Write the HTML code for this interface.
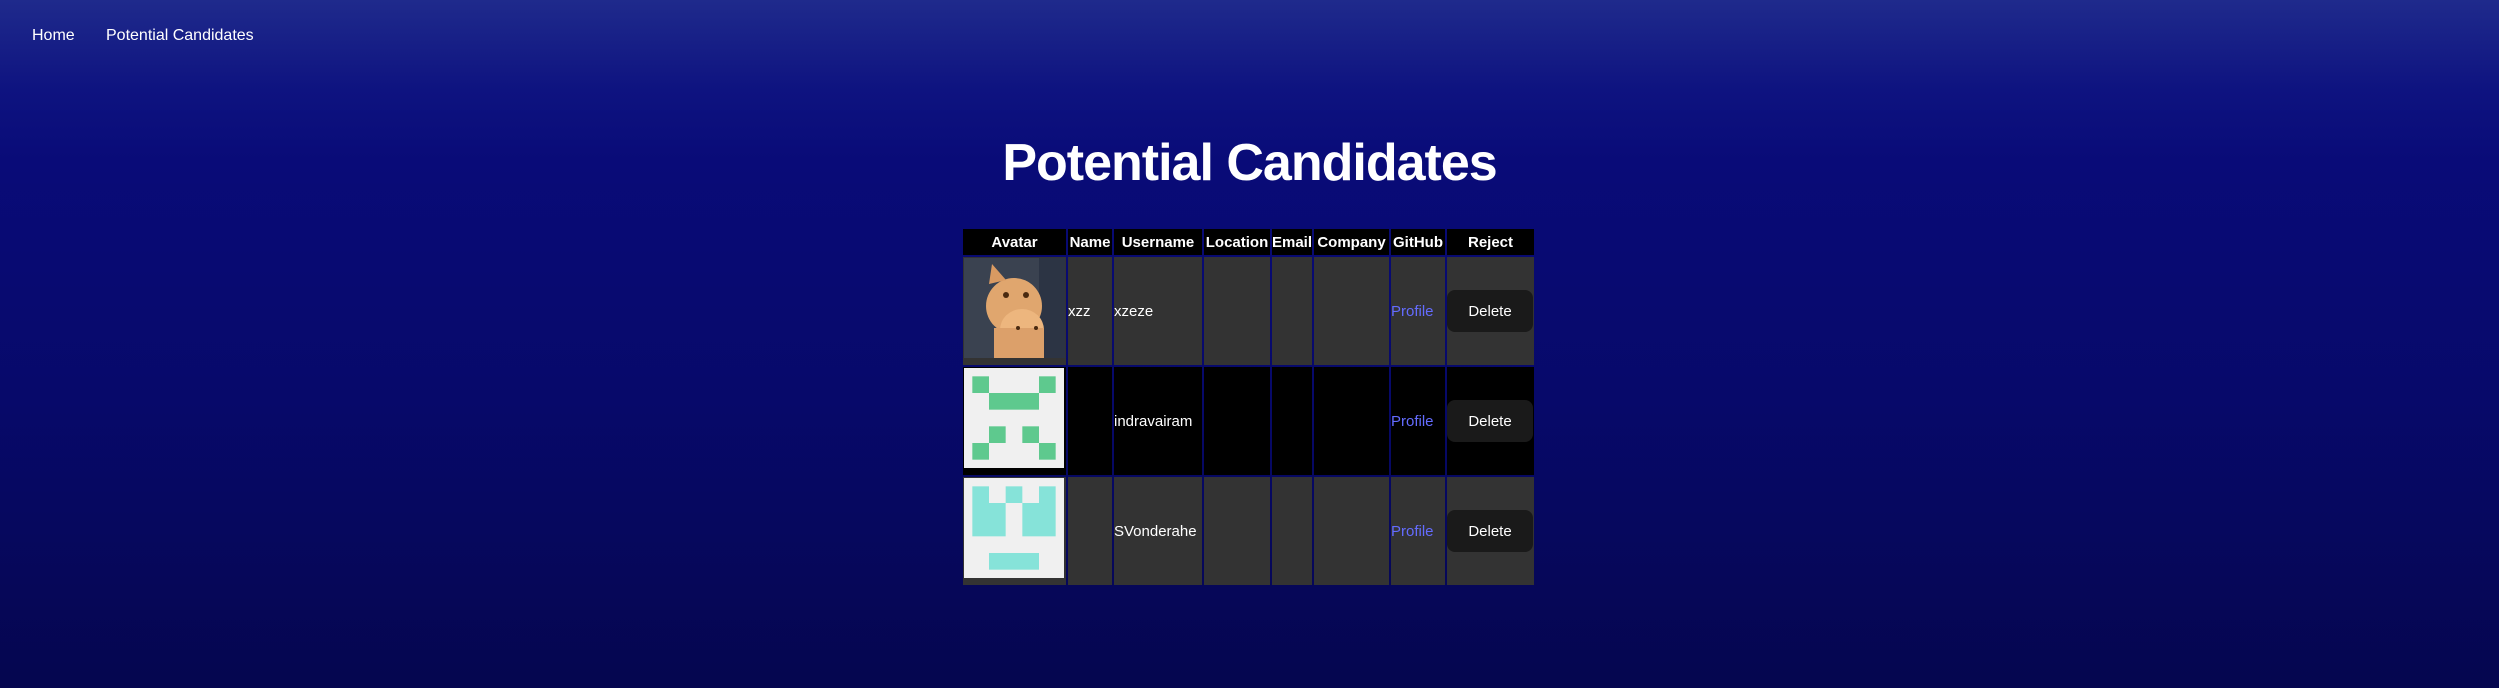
<!DOCTYPE html>
<html><head><meta charset="utf-8"><style>
*{margin:0;padding:0;box-sizing:border-box}
html,body{width:2499px;height:688px;overflow:hidden}
body{background:linear-gradient(180deg,#1f2a8c 0px,#0e1380 90px,#090b78 160px,#07096a 400px,#05064f 688px);font-family:"Liberation Sans",sans-serif;color:#fff;position:relative}
.nav{position:absolute;top:27px;font-size:16px}
h1{position:absolute;left:0;width:2499px;text-align:center;top:134px;font-size:52px;line-height:58px;font-weight:bold;letter-spacing:-1px}
.c{position:absolute;font-size:15px;display:flex;align-items:center}
.h{background:#000;font-weight:bold;justify-content:center;top:229px;height:26px}
.g{background:#333}.k{background:#000}
.p{color:#646cff}
.btn{position:absolute;background:#1a1a1a;border-radius:8px;width:86px;height:42px;left:1447px;display:flex;align-items:center;justify-content:center;font-size:15px}
</style></head><body>
<div class="nav" style="left:32px">Home</div>
<div class="nav" style="left:106px">Potential Candidates</div>
<h1>Potential Candidates</h1>

<div class="c h" style="left:963px;width:103px">Avatar</div>
<div class="c h" style="left:1068px;width:44px">Name</div>
<div class="c h" style="left:1114px;width:88px">Username</div>
<div class="c h" style="left:1204px;width:66px">Location</div>
<div class="c h" style="left:1272px;width:40px">Email</div>
<div class="c h" style="left:1314px;width:75px">Company</div>
<div class="c h" style="left:1391px;width:54px">GitHub</div>
<div class="c h" style="left:1447px;width:87px">Reject</div>

<!-- row 1 -->
<div class="c g" style="left:963px;top:257px;width:103px;height:108px"></div>
<svg style="position:absolute;left:964px;top:258px" width="101" height="100" viewBox="0 0 101 100">
<rect width="101" height="100" fill="#3a4250"/><rect x="75" width="26" height="100" fill="#2c3444"/>
<ellipse cx="50" cy="48" rx="28" ry="28" fill="#e0a66e"/>
<polygon points="25,26 28,6 42,22" fill="#d99a62"/>
<ellipse cx="58" cy="72" rx="22" ry="21" fill="#edb67e"/>
<rect x="30" y="70" width="50" height="30" fill="#dca06a"/>
<circle cx="42" cy="37" r="3" fill="#4a2a10"/><circle cx="62" cy="37" r="3" fill="#4a2a10"/>
<circle cx="54" cy="70" r="2" fill="#4a2a10"/><circle cx="72" cy="70" r="2" fill="#4a2a10"/>
</svg>
<div class="c g" style="left:1068px;top:257px;width:44px;height:108px">xzz</div>
<div class="c g" style="left:1114px;top:257px;width:88px;height:108px">xzeze</div>
<div class="c g" style="left:1204px;top:257px;width:66px;height:108px"></div>
<div class="c g" style="left:1272px;top:257px;width:40px;height:108px"></div>
<div class="c g" style="left:1314px;top:257px;width:75px;height:108px"></div>
<div class="c g p" style="left:1391px;top:257px;width:54px;height:108px">Profile</div>
<div class="c g" style="left:1447px;top:257px;width:87px;height:108px"></div>
<div class="btn" style="top:290px">Delete</div>

<!-- row 2 -->
<div class="c k" style="left:963px;top:367px;width:103px;height:108px"></div>
<svg style="position:absolute;left:964px;top:368px" width="100" height="100" viewBox="0 0 6 6" preserveAspectRatio="none">
<rect width="6" height="6" fill="#f0f0f0"/>
<g fill="#5ec98e"><rect x=".5" y=".5" width="1" height="1"/><rect x="4.5" y=".5" width="1" height="1"/><rect x="1.5" y="1.5" width="3" height="1"/><rect x="1.5" y="3.5" width="1" height="1"/><rect x="3.5" y="3.5" width="1" height="1"/><rect x=".5" y="4.5" width="1" height="1"/><rect x="4.5" y="4.5" width="1" height="1"/></g>
</svg>
<div class="c k" style="left:1068px;top:367px;width:44px;height:108px"></div>
<div class="c k" style="left:1114px;top:367px;width:88px;height:108px">indravairam</div>
<div class="c k" style="left:1204px;top:367px;width:66px;height:108px"></div>
<div class="c k" style="left:1272px;top:367px;width:40px;height:108px"></div>
<div class="c k" style="left:1314px;top:367px;width:75px;height:108px"></div>
<div class="c k p" style="left:1391px;top:367px;width:54px;height:108px">Profile</div>
<div class="c k" style="left:1447px;top:367px;width:87px;height:108px"></div>
<div class="btn" style="top:400px">Delete</div>

<!-- row 3 -->
<div class="c g" style="left:963px;top:477px;width:103px;height:108px"></div>
<svg style="position:absolute;left:964px;top:478px" width="100" height="100" viewBox="0 0 6 6" preserveAspectRatio="none">
<rect width="6" height="6" fill="#f0f0f0"/>
<g fill="#86e3d9"><rect x=".5" y=".5" width="1" height="3"/><rect x="2.5" y=".5" width="1" height="1"/><rect x="4.5" y=".5" width="1" height="3"/><rect x="1.5" y="1.5" width="1" height="2"/><rect x="3.5" y="1.5" width="1" height="2"/><rect x="1.5" y="4.5" width="3" height="1"/></g>
</svg>
<div class="c g" style="left:1068px;top:477px;width:44px;height:108px"></div>
<div class="c g" style="left:1114px;top:477px;width:88px;height:108px">SVonderahe</div>
<div class="c g" style="left:1204px;top:477px;width:66px;height:108px"></div>
<div class="c g" style="left:1272px;top:477px;width:40px;height:108px"></div>
<div class="c g" style="left:1314px;top:477px;width:75px;height:108px"></div>
<div class="c g p" style="left:1391px;top:477px;width:54px;height:108px">Profile</div>
<div class="c g" style="left:1447px;top:477px;width:87px;height:108px"></div>
<div class="btn" style="top:510px">Delete</div>
</body></html>
